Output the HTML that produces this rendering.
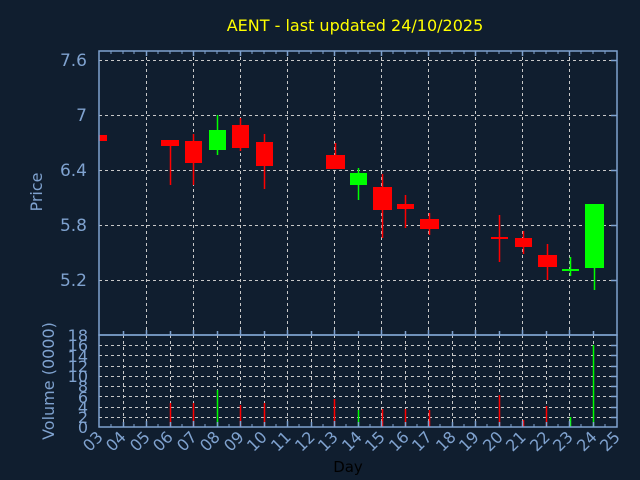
<!DOCTYPE html>
<html><head><meta charset="utf-8"><style>
html,body{margin:0;padding:0;background:#101e2f;}
svg{display:block;}
text{font-family:"DejaVu Sans","Liberation Sans",sans-serif;}
</style></head><body>
<svg width="640" height="480" viewBox="0 0 640 480" xmlns="http://www.w3.org/2000/svg">
<rect width="640" height="480" fill="#101e2f"/>
<text x="355" y="31" fill="#ffff00" font-size="16" text-anchor="middle">AENT - last updated 24/10/2025</text>

<g stroke="#c8c8c8" stroke-width="1" stroke-dasharray="3,3" fill="none">
<line x1="99" y1="60.5" x2="617" y2="60.5"/>
<line x1="99" y1="115.5" x2="617" y2="115.5"/>
<line x1="99" y1="170.5" x2="617" y2="170.5"/>
<line x1="99" y1="225.5" x2="617" y2="225.5"/>
<line x1="99" y1="280.5" x2="617" y2="280.5"/>
<line x1="146.5" y1="51" x2="146.5" y2="335"/>
<line x1="193.5" y1="51" x2="193.5" y2="335"/>
<line x1="240.5" y1="51" x2="240.5" y2="335"/>
<line x1="287.5" y1="51" x2="287.5" y2="335"/>
<line x1="334.5" y1="51" x2="334.5" y2="335"/>
<line x1="381.5" y1="51" x2="381.5" y2="335"/>
<line x1="428.5" y1="51" x2="428.5" y2="335"/>
<line x1="475.5" y1="51" x2="475.5" y2="335"/>
<line x1="522.5" y1="51" x2="522.5" y2="335"/>
<line x1="569.5" y1="51" x2="569.5" y2="335"/>
</g>
<g stroke="#c8c8c8" stroke-width="1" stroke-dasharray="3,3" fill="none">
<line x1="99" y1="345.5" x2="617" y2="345.5"/>
<line x1="99" y1="355.5" x2="617" y2="355.5"/>
<line x1="99" y1="366.5" x2="617" y2="366.5"/>
<line x1="99" y1="376.5" x2="617" y2="376.5"/>
<line x1="99" y1="386.5" x2="617" y2="386.5"/>
<line x1="99" y1="396.5" x2="617" y2="396.5"/>
<line x1="99" y1="407.5" x2="617" y2="407.5"/>
<line x1="99" y1="417.5" x2="617" y2="417.5"/>
<line x1="123.5" y1="335" x2="123.5" y2="427"/><line x1="146.5" y1="335" x2="146.5" y2="427"/>
<line x1="170.5" y1="335" x2="170.5" y2="427"/><line x1="193.5" y1="335" x2="193.5" y2="427"/>
<line x1="217.5" y1="335" x2="217.5" y2="427"/><line x1="240.5" y1="335" x2="240.5" y2="427"/>
<line x1="264.5" y1="335" x2="264.5" y2="427"/><line x1="287.5" y1="335" x2="287.5" y2="427"/>
<line x1="311.5" y1="335" x2="311.5" y2="427"/><line x1="334.5" y1="335" x2="334.5" y2="427"/>
<line x1="358.5" y1="335" x2="358.5" y2="427"/><line x1="381.5" y1="335" x2="381.5" y2="427"/>
<line x1="405.5" y1="335" x2="405.5" y2="427"/><line x1="428.5" y1="335" x2="428.5" y2="427"/>
<line x1="452.5" y1="335" x2="452.5" y2="427"/><line x1="475.5" y1="335" x2="475.5" y2="427"/>
<line x1="499.5" y1="335" x2="499.5" y2="427"/><line x1="522.5" y1="335" x2="522.5" y2="427"/>
<line x1="546.5" y1="335" x2="546.5" y2="427"/><line x1="569.5" y1="335" x2="569.5" y2="427"/>
<line x1="593.5" y1="335" x2="593.5" y2="427"/>
</g>

<g stroke-width="1.5">
<rect x="99" y="135" width="8" height="6" fill="#ff0000"/>
<line x1="170.5" y1="140" x2="170.5" y2="185" stroke="#ff0000"/>
<rect x="161" y="140" width="18" height="6" fill="#ff0000"/>
<line x1="193.5" y1="134" x2="193.5" y2="185" stroke="#ff0000"/>
<rect x="185" y="141" width="17" height="22" fill="#ff0000"/>
<line x1="217.5" y1="115" x2="217.5" y2="155" stroke="#00ff00"/>
<rect x="209" y="130" width="17" height="20" fill="#00ff00"/>
<line x1="240.5" y1="118" x2="240.5" y2="151" stroke="#ff0000"/>
<rect x="232" y="125" width="17" height="23" fill="#ff0000"/>
<line x1="264.5" y1="134" x2="264.5" y2="189" stroke="#ff0000"/>
<rect x="256" y="142" width="17" height="24" fill="#ff0000"/>
<line x1="335.5" y1="143" x2="335.5" y2="169" stroke="#ff0000"/>
<rect x="326" y="155" width="19" height="14" fill="#ff0000"/>
<line x1="358.5" y1="168" x2="358.5" y2="200" stroke="#00ff00"/>
<rect x="350" y="173" width="17" height="12" fill="#00ff00"/>
<line x1="382.5" y1="174" x2="382.5" y2="238" stroke="#ff0000"/>
<rect x="373" y="187" width="19" height="23" fill="#ff0000"/>
<line x1="405.5" y1="195" x2="405.5" y2="228" stroke="#ff0000"/>
<rect x="397" y="204" width="17" height="5" fill="#ff0000"/>
<line x1="429.5" y1="213" x2="429.5" y2="235" stroke="#ff0000"/>
<rect x="420" y="219" width="19" height="10" fill="#ff0000"/>
<line x1="499.5" y1="215" x2="499.5" y2="262" stroke="#ff0000"/>
<rect x="491" y="237" width="17" height="2" fill="#ff0000"/>
<line x1="523.5" y1="231" x2="523.5" y2="254" stroke="#ff0000"/>
<rect x="515" y="238" width="17" height="9" fill="#ff0000"/>
<line x1="547.5" y1="244" x2="547.5" y2="280" stroke="#ff0000"/>
<rect x="538" y="255" width="19" height="12" fill="#ff0000"/>
<line x1="570.5" y1="257" x2="570.5" y2="276" stroke="#00ff00"/>
<rect x="562" y="269" width="17" height="2" fill="#00ff00"/>
<line x1="594.5" y1="268" x2="594.5" y2="290" stroke="#00ff00"/>
<rect x="585" y="204" width="19" height="64" fill="#00ff00"/>
</g>

<g stroke-width="1.5">
<line x1="170.5" y1="403" x2="170.5" y2="427" stroke="#ff0000"/>
<line x1="193.5" y1="403" x2="193.5" y2="427" stroke="#ff0000"/>
<line x1="217.5" y1="390" x2="217.5" y2="427" stroke="#00ff00"/>
<line x1="240.5" y1="405" x2="240.5" y2="427" stroke="#ff0000"/>
<line x1="264.5" y1="403" x2="264.5" y2="427" stroke="#ff0000"/>
<line x1="334.5" y1="399" x2="334.5" y2="427" stroke="#ff0000"/>
<line x1="358.5" y1="410" x2="358.5" y2="427" stroke="#00ff00"/>
<line x1="382.5" y1="409" x2="382.5" y2="427" stroke="#ff0000"/>
<line x1="405.5" y1="409" x2="405.5" y2="427" stroke="#ff0000"/>
<line x1="429.5" y1="410" x2="429.5" y2="427" stroke="#ff0000"/>
<line x1="499.5" y1="395" x2="499.5" y2="427" stroke="#ff0000"/>
<line x1="523.5" y1="420" x2="523.5" y2="427" stroke="#ff0000"/>
<line x1="546.5" y1="406" x2="546.5" y2="427" stroke="#ff0000"/>
<line x1="570.5" y1="417" x2="570.5" y2="427" stroke="#00ff00"/>
<line x1="593.5" y1="345" x2="593.5" y2="427" stroke="#00ff00"/>
</g>

<g stroke="#7fa2cf" stroke-width="1.5" fill="none">
<rect x="99" y="51" width="518" height="284"/>
<rect x="99" y="335" width="518" height="92"/>
<path d="M146.5 51v5M193.5 51v5M240.5 51v5M287.5 51v5M334.5 51v5M381.5 51v5M428.5 51v5M475.5 51v5M522.5 51v5M569.5 51v5"/>
<path d="M611 60.5h6M611 115.5h6M611 170.5h6M611 225.5h6M611 280.5h6"/>
<path d="M611 345.5h6M611 355.5h6M611 366.5h6M611 376.5h6M611 386.5h6M611 396.5h6M611 407.5h6M611 417.5h6"/>
<path d="M123.5 335v-4M146.5 335v-5M170.5 335v-4M193.5 335v-5M217.5 335v-4M240.5 335v-5M264.5 335v-4M287.5 335v-5M311.5 335v-4M334.5 335v-5M358.5 335v-4M381.5 335v-5M405.5 335v-4M428.5 335v-5M452.5 335v-4M475.5 335v-5M499.5 335v-4M522.5 335v-5M546.5 335v-4M569.5 335v-5M593.5 335v-4"/>
<path d="M123.5 427v-5M146.5 427v-6M170.5 427v-5M193.5 427v-6M217.5 427v-5M240.5 427v-6M264.5 427v-5M287.5 427v-6M311.5 427v-5M334.5 427v-6M358.5 427v-5M381.5 427v-6M405.5 427v-5M428.5 427v-6M452.5 427v-5M475.5 427v-6M499.5 427v-5M522.5 427v-6M546.5 427v-5M569.5 427v-6M593.5 427v-5"/>
</g>
<g stroke="#7fa2cf" stroke-width="1" fill="none">
<path d="M111 51v3M123 51v3M134 51v3M158 51v3M170 51v3M182 51v3M205 51v3M217 51v3M229 51v3M252 51v3M264 51v3M276 51v3M299 51v3M311 51v3M323 51v3M346 51v3M358 51v3M370 51v3M393 51v3M405 51v3M417 51v3M440 51v3M452 51v3M464 51v3M487 51v3M499 51v3M511 51v3M534 51v3M546 51v3M558 51v3M581 51v3M593 51v3M605 51v3"/>
<path d="M111 427v-3M134 427v-3M158 427v-3M182 427v-3M205 427v-3M229 427v-3M252 427v-3M276 427v-3M299 427v-3M323 427v-3M346 427v-3M370 427v-3M393 427v-3M417 427v-3M440 427v-3M464 427v-3M487 427v-3M511 427v-3M534 427v-3M558 427v-3M581 427v-3M605 427v-3"/>
</g>

<g fill="#7fa2cf" font-size="17" text-anchor="end">
<text x="87" y="66">7.6</text>
<text x="87" y="121">7</text>
<text x="87" y="176">6.4</text>
<text x="87" y="231">5.8</text>
<text x="87" y="286">5.2</text>
</g>
<text transform="translate(42,192) rotate(-90)" fill="#7fa2cf" font-size="16" text-anchor="middle">Price</text>

<g fill="#7fa2cf" font-size="16" text-anchor="end">
<text x="88" y="341">18</text>
<text x="88" y="351">16</text>
<text x="88" y="362">14</text>
<text x="88" y="372">12</text>
<text x="88" y="382">10</text>
<text x="88" y="392">8</text>
<text x="88" y="403">6</text>
<text x="88" y="413">4</text>
<text x="88" y="423">2</text>
<text x="88" y="433">0</text>
</g>
<text transform="translate(54,381) rotate(-90)" fill="#7fa2cf" font-size="16" text-anchor="middle">Volume (0000)</text>

<g fill="#7fa2cf" font-size="16" text-anchor="end">
<text transform="translate(104,438) rotate(-45)">03</text>
<text transform="translate(127,438) rotate(-45)">04</text>
<text transform="translate(151,438) rotate(-45)">05</text>
<text transform="translate(174,438) rotate(-45)">06</text>
<text transform="translate(198,438) rotate(-45)">07</text>
<text transform="translate(221,438) rotate(-45)">08</text>
<text transform="translate(245,438) rotate(-45)">09</text>
<text transform="translate(268,438) rotate(-45)">10</text>
<text transform="translate(292,438) rotate(-45)">11</text>
<text transform="translate(316,438) rotate(-45)">12</text>
<text transform="translate(339,438) rotate(-45)">13</text>
<text transform="translate(363,438) rotate(-45)">14</text>
<text transform="translate(386,438) rotate(-45)">15</text>
<text transform="translate(410,438) rotate(-45)">16</text>
<text transform="translate(433,438) rotate(-45)">17</text>
<text transform="translate(457,438) rotate(-45)">18</text>
<text transform="translate(480,438) rotate(-45)">19</text>
<text transform="translate(504,438) rotate(-45)">20</text>
<text transform="translate(527,438) rotate(-45)">21</text>
<text transform="translate(551,438) rotate(-45)">22</text>
<text transform="translate(574,438) rotate(-45)">23</text>
<text transform="translate(598,438) rotate(-45)">24</text>
<text transform="translate(621,438) rotate(-45)">25</text>
</g>
<text x="348" y="472" fill="#000000" font-size="15" text-anchor="middle">Day</text>
</svg>
</body></html>
